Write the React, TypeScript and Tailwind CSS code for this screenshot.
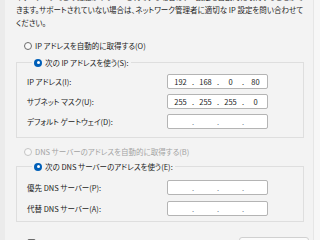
import React from 'react';

const font = "font-['Noto_Sans_CJK_JP','Noto_Sans',sans-serif] [font-feature-settings:'palt']";

const Radio = ({ checked, disabled }: { checked?: boolean; disabled?: boolean }) =>
  checked ? (
    <span className="flex h-[8px] w-[8px] shrink-0 items-center justify-center rounded-full bg-[#005fb8]">
      <span className="h-[3px] w-[3px] rounded-full bg-white" />
    </span>
  ) : (
    <span
      className={`h-[8px] w-[8px] shrink-0 rounded-full border ${
        disabled ? 'border-[#c4c4c4]' : 'border-[#6b6b6b]'
      } bg-[#f9f9f9]`}
    />
  );

const IpBox = ({ parts }: { parts?: string[] }) => (
  <div className="flex h-[15px] w-[101px] items-center rounded-[2px] border border-[#b4b4b4] bg-white pl-[2px] text-[#1b1b1b]">
    {[0, 1, 2, 3].map(i => (
      <React.Fragment key={i}>
        <span className="w-[21px] text-center">{parts ? parts[i] : ''}</span>
        {i < 3 && (
          <span className={`w-[4px] text-center ${parts ? '' : 'text-[#6a7b90]'}`}>.</span>
        )}
      </React.Fragment>
    ))}
  </div>
);

const Row = ({ label, parts }: { label: string; parts?: string[] }) => (
  <div className="flex items-center">
    <span className="w-[140px]">{label}</span>
    <IpBox parts={parts} />
  </div>
);

export default function App() {
  return (
    <div className={`flex h-[240px] w-[320px] overflow-hidden bg-[#f3f3f3] text-[7.5px] leading-[13px] text-[#1b1b1b] ${font}`}>
      <div className="w-[5px] shrink-0 bg-[#ebebeb]" />
      <div className="flex w-[308px] flex-col pl-[11px]">
        <div className="mt-[-10px] whitespace-nowrap">
          <p>ネットワークでこの機能がサポートされている場合は、IP 設定を自動的に取得することがで</p>
          <p>きます。サポートされていない場合は、ネットワーク管理者に適切な IP 設定を問い合わせて</p>
          <p>ください。</p>
        </div>

        <div className="mt-[10px] flex items-center gap-[3px] pl-[8px]">
          <Radio />
          <span>IP アドレスを自動的に取得する(O)</span>
        </div>

        <fieldset className="mt-[4px] w-[288px] border border-[#dedede] pb-[8px] pl-[10px]">
          <legend className="ml-[5px] px-[2px]">
            <span className="flex items-center gap-[3px]">
              <Radio checked />
              <span>次の IP アドレスを使う(S):</span>
            </span>
          </legend>
          <div className="mt-[5px] flex flex-col gap-[5px]">
            <Row label="IP アドレス(I):" parts={['192', '168', '0', '80']} />
            <Row label="サブネット マスク(U):" parts={['255', '255', '255', '0']} />
            <Row label="デフォルト ゲートウェイ(D):" />
          </div>
        </fieldset>

        <div className="mt-[7px] flex items-center gap-[3px] pl-[8px] text-[#a3a3a3]">
          <Radio disabled />
          <span>DNS サーバーのアドレスを自動的に取得する(B)</span>
        </div>

        <fieldset className="mt-[2px] w-[288px] border border-[#dedede] pb-[5px] pl-[10px]">
          <legend className="ml-[5px] px-[2px]">
            <span className="flex items-center gap-[3px]">
              <Radio checked />
              <span>次の DNS サーバーのアドレスを使う(E):</span>
            </span>
          </legend>
          <div className="mt-[7px] flex flex-col gap-[6px]">
            <Row label="優先 DNS サーバー(P):" />
            <Row label="代替 DNS サーバー(A):" />
          </div>
        </fieldset>

        <div className="mt-[15px] flex items-start justify-between pl-[11px] pr-[4px]">
          <div className="flex items-center gap-[4px]">
            <span className="h-[9px] w-[9px] rounded-[2px] border border-[#6b6b6b] bg-[#f9f9f9]" />
            <span>終了時に設定を検証する(L)</span>
          </div>
          <div className="h-[18px] w-[70px] rounded-[3px] border border-[#d0d0d0] bg-[#fbfbfb] text-center">
            詳細設定(V)...
          </div>
        </div>
      </div>
      <div className="w-[7px] shrink-0 border-l border-[#e6e6e6] bg-[#f7f7f7]" />
    </div>
  );
}
